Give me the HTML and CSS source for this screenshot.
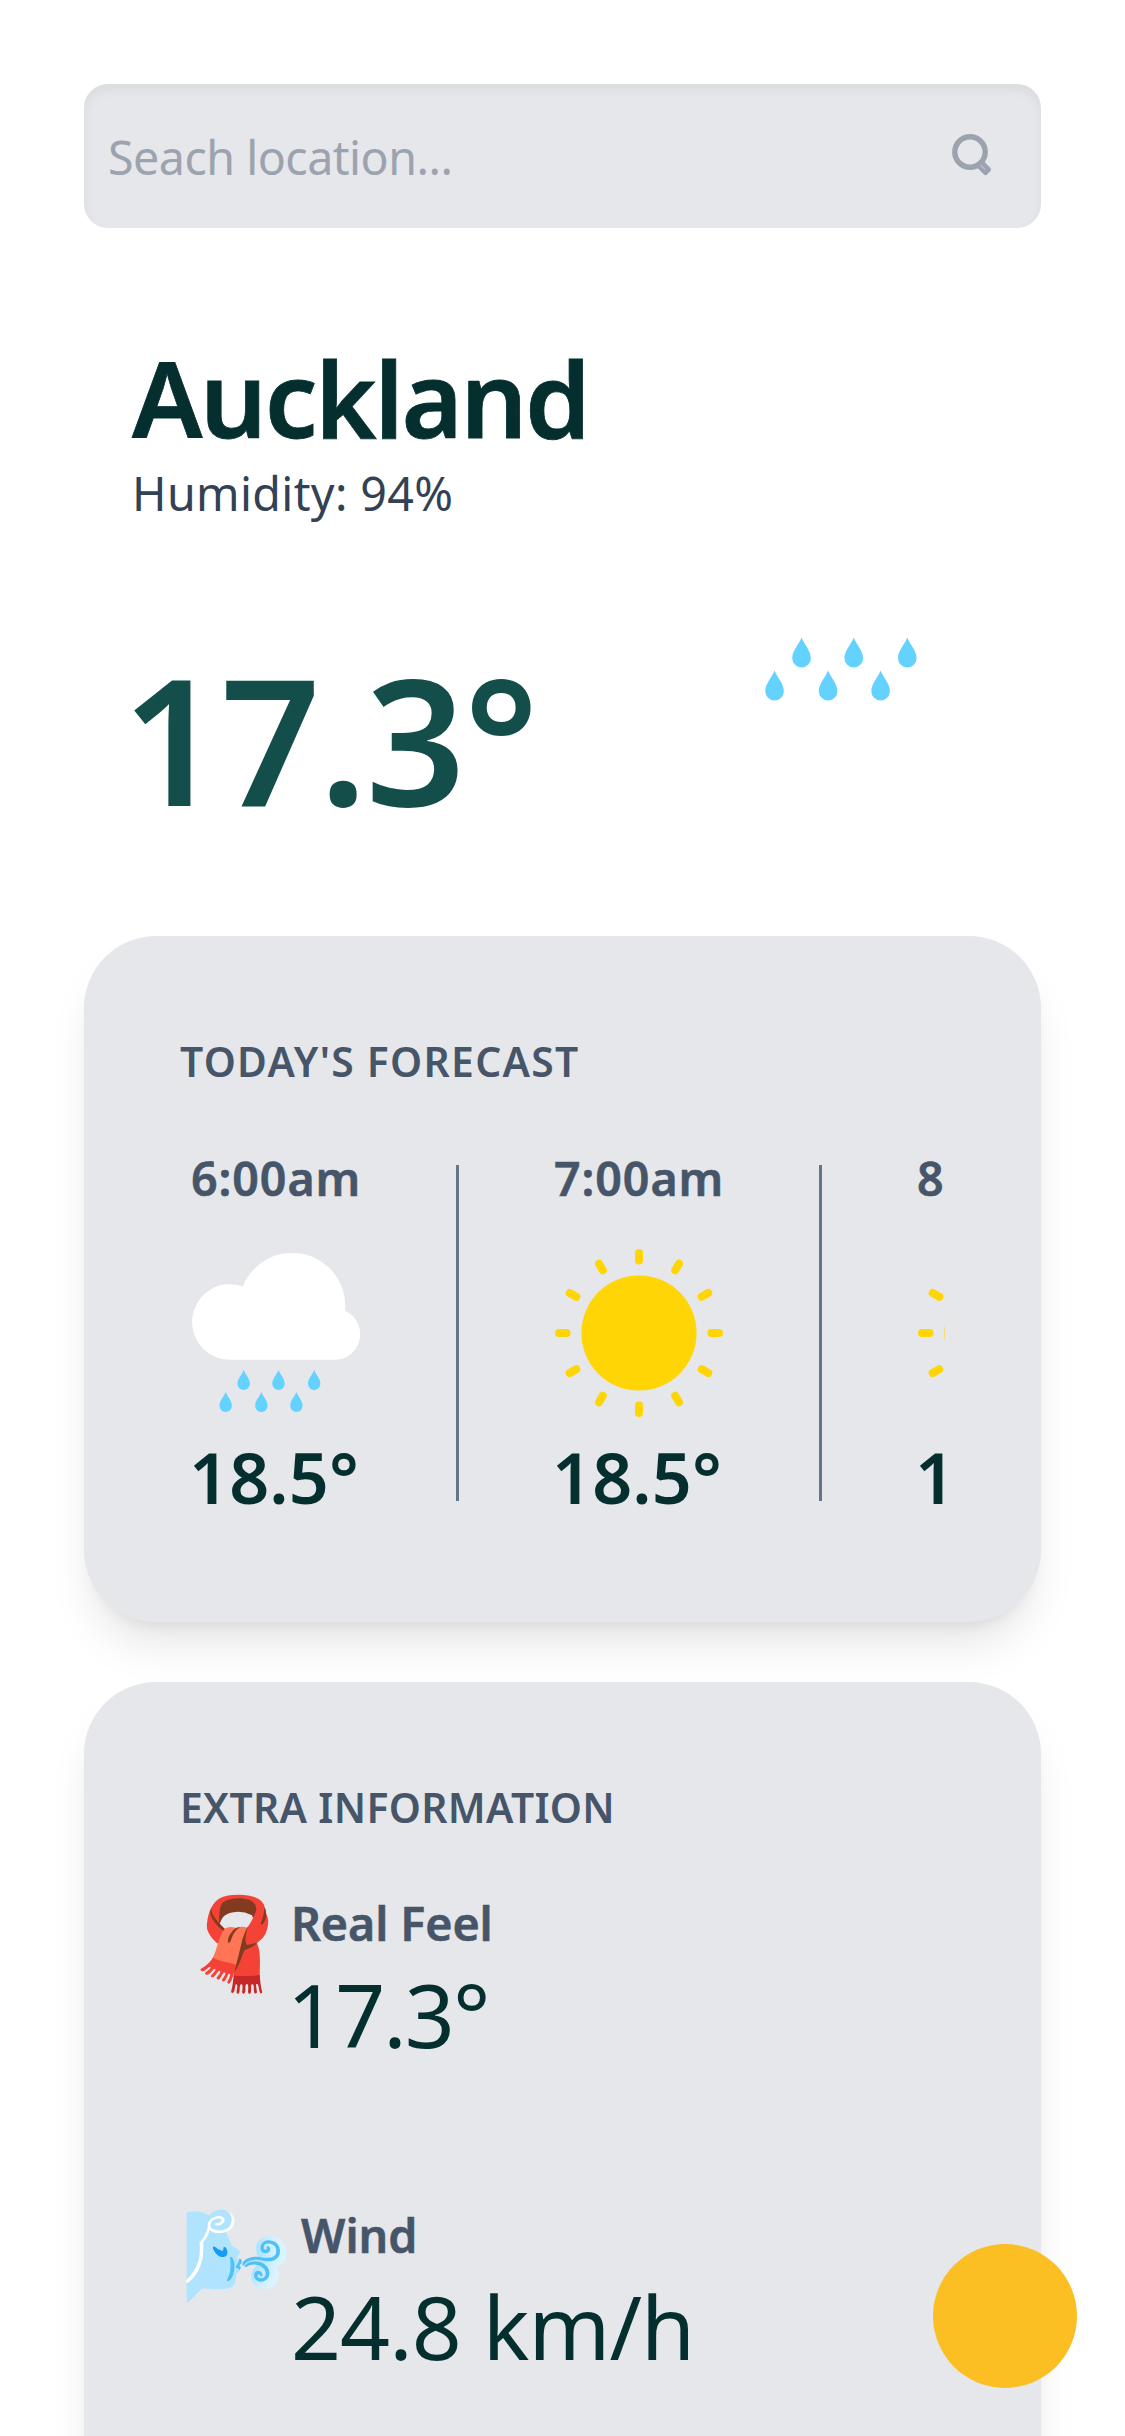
FILE: index.html
```html
<!DOCTYPE html>
<html lang="en">
<head>
<meta charset="utf-8">
<title>Weather</title>
<link rel="stylesheet" href="styles.css">
</head>
<body>
<svg class="defs" aria-hidden="true">
  <defs>
    <symbol id="rain" viewBox="0 0 168 168">
      <path fill="#fff" d="M37.5 110.8a37.8 37.8 0 1 1 13.4-73.3A53 53 0 0 1 153 61.8A25.6 25.6 0 0 1 142.4 110.8Z"/>
      <g fill="#63d2ff">
        <path id="drop" d="M51.7 121C53.6 126 57.9 129.5 57.9 134.8a6.2 6.2 0 0 1-12.4 0C45.5 129.5 49.8 126 51.7 121Z"/>
        <use href="#drop" x="34.8"/><use href="#drop" x="70.5"/>
        <use href="#drop" x="-18" y="22"/><use href="#drop" x="17.7" y="22"/><use href="#drop" x="52.7" y="22"/>
      </g>
    </symbol>
    <symbol id="sun" viewBox="-84 -84 168 168">
      <g fill="#ffd506">
        <circle r="57.6"/>
        <g id="rays"><rect id="ray" x="-4" y="-84" width="8" height="15.6" rx="4"/>
        <use href="#ray" transform="rotate(30)"/><use href="#ray" transform="rotate(60)"/></g>
        <use href="#rays" transform="rotate(90)"/><use href="#rays" transform="rotate(180)"/><use href="#rays" transform="rotate(270)"/>
      </g>
    </symbol>
  </defs>
</svg>
<main class="page">
  <div class="search">
    <span class="search-text">Seach location...</span>
    <svg class="search-icon" viewBox="0 0 42 46">
      <circle cx="19" cy="19" r="15.2" fill="none" stroke="#9ca3af" stroke-width="5.4"/>
      <path d="M27.5 32.5L34.5 39.5L37.5 36.5L30.5 29.5Z" fill="#9ca3af" stroke="#9ca3af" stroke-width="5" stroke-linejoin="round"/>
      <path d="M29.5 32L34 36.5" stroke="#d1d5db" stroke-width="1"/>
    </svg>
  </div>
  <section class="hero">
    <div>
      <h1 class="city">Auckland</h1>
      <p class="humidity">Humidity: 94%</p>
      <p class="temp">17.3°</p>
    </div>
    <svg class="hero-icon"><use href="#rain"/></svg>
  </section>
  <section class="card">
    <h2 class="title">TODAY'S FORECAST</h2>
    <div class="hours">
      <div class="hour"><p class="time">6:00am</p><svg class="icon"><use href="#rain"/></svg><p class="value">18.5°</p></div>
      <div class="rule"></div>
      <div class="hour"><p class="time">7:00am</p><svg class="icon"><use href="#sun"/></svg><p class="value">18.5°</p></div>
      <div class="rule"></div>
      <div class="hour"><p class="time">8</p><svg class="icon"><use href="#sun"/></svg><p class="value">1</p></div>
    </div>
  </section>
  <section class="card card-extra">
    <h2 class="title title-extra">EXTRA INFORMATION</h2>
    <div class="extras">
      <div class="extra"><span class="emoji">🧣</span><div><h3 class="label">Real Feel</h3><p class="reading reading-feel">17.3°</p></div></div>
      <div class="extra"><span class="emoji">🌬️</span><div><h3 class="label label-wind">Wind</h3><p class="reading">24.8 km/h</p></div></div>
    </div>
  </section>
</main>
<div class="fab"></div>
</body>
</html>
```
FILE: styles.css
```css
* { box-sizing: border-box; margin: 0; padding: 0; }
body {
  height: 2436px;
  overflow: hidden;
  background: #fff;
  font-family: "Noto Sans", sans-serif;
  color: #042f2e;
}
.defs { position: absolute; width: 0; height: 0; }
.page { height: 2436px; overflow: hidden; padding: 84px 84px 0; }
.search {
  display: flex;
  align-items: center;
  justify-content: space-between;
  height: 144px;
  padding: 2px 48px 0 24px;
  border-radius: 24px;
  background: #e5e7eb;
  box-shadow: inset 0 6px 12px rgba(0, 0, 0, .05);
}
.search-text { font-size: 46.6px; letter-spacing: -.52px; color: #9ca3af; }
.search-icon { width: 42px; height: 46px; margin-top: -2px; }
.hero {
  display: flex;
  justify-content: space-between;
  padding: 110px 65px 0 48px;
}
.city { font-size: 105px; line-height: 120px; font-weight: 600; letter-spacing: -2.45px; -webkit-text-stroke: .8px currentColor; }
.humidity { font-size: 46.6px; line-height: 70px; letter-spacing: .35px; color: #334155; }
.temp { margin: 120px 0 0 -10px; font-size: 175px; line-height: 180px; font-weight: 600; letter-spacing: -1.65px; color: #134e4a; }
.hero-icon { width: 252px; height: 252px; margin-top: 118px; }
.card {
  margin-top: 108px;
  height: 686px;
  padding: 96px 96px 0;
  border-radius: 72px;
  background: #e5e7eb;
  box-shadow: 0 30px 45px -9px rgba(0, 0, 0, .1), 0 12px 18px -12px rgba(0, 0, 0, .1);
}
.card-extra { margin-top: 60px; height: 900px; }
.title { font-size: 40.8px; line-height: 58px; font-weight: 600; letter-spacing: 1.31px; color: #475569; white-space: nowrap; }
.title-extra { letter-spacing: .34px; }
.hours { display: flex; align-items: center; gap: 96px; margin-top: 51px; padding-left: 12px; overflow: hidden; }
.hour { flex: none; width: 168px; }
.time { margin-left: -1px; padding-top: 1px; font-size: 46.6px; line-height: 72px; font-weight: 600; letter-spacing: .9px; color: #475569; -webkit-text-stroke: .6px currentColor; }
.icon { display: block; width: 168px; height: 168px; margin: 35px 0 12px; }
.value { margin-left: -3px; font-size: 70px; line-height: 96px; font-weight: 600; letter-spacing: .14px; }
.rule { flex: none; width: 3px; height: 336px; background: #64748b; }
.extras { display: grid; gap: 131px; margin-top: 51px; }
.extra { display: flex; align-items: flex-start; height: 181px; }
.emoji { flex: none; width: 111px; padding-top: 4px; font-family: "Noto Color Emoji", sans-serif; font-size: 90px; line-height: 108px; }
.label { font-size: 46.6px; line-height: 72px; font-weight: 600; letter-spacing: -.1px; color: #475569; -webkit-text-stroke: .6px currentColor; }
.label-wind { padding-left: 10px; letter-spacing: 0; }
.reading { margin-top: 1px; font-size: 87.5px; line-height: 108px; letter-spacing: -.93px; white-space: nowrap; }
.reading-feel { margin-left: -4px; letter-spacing: -1.9px; }
.fab {
  position: fixed;
  right: 48px;
  bottom: 48px;
  width: 144px;
  height: 144px;
  border-radius: 50%;
  background: #fbbf24;
}
```
